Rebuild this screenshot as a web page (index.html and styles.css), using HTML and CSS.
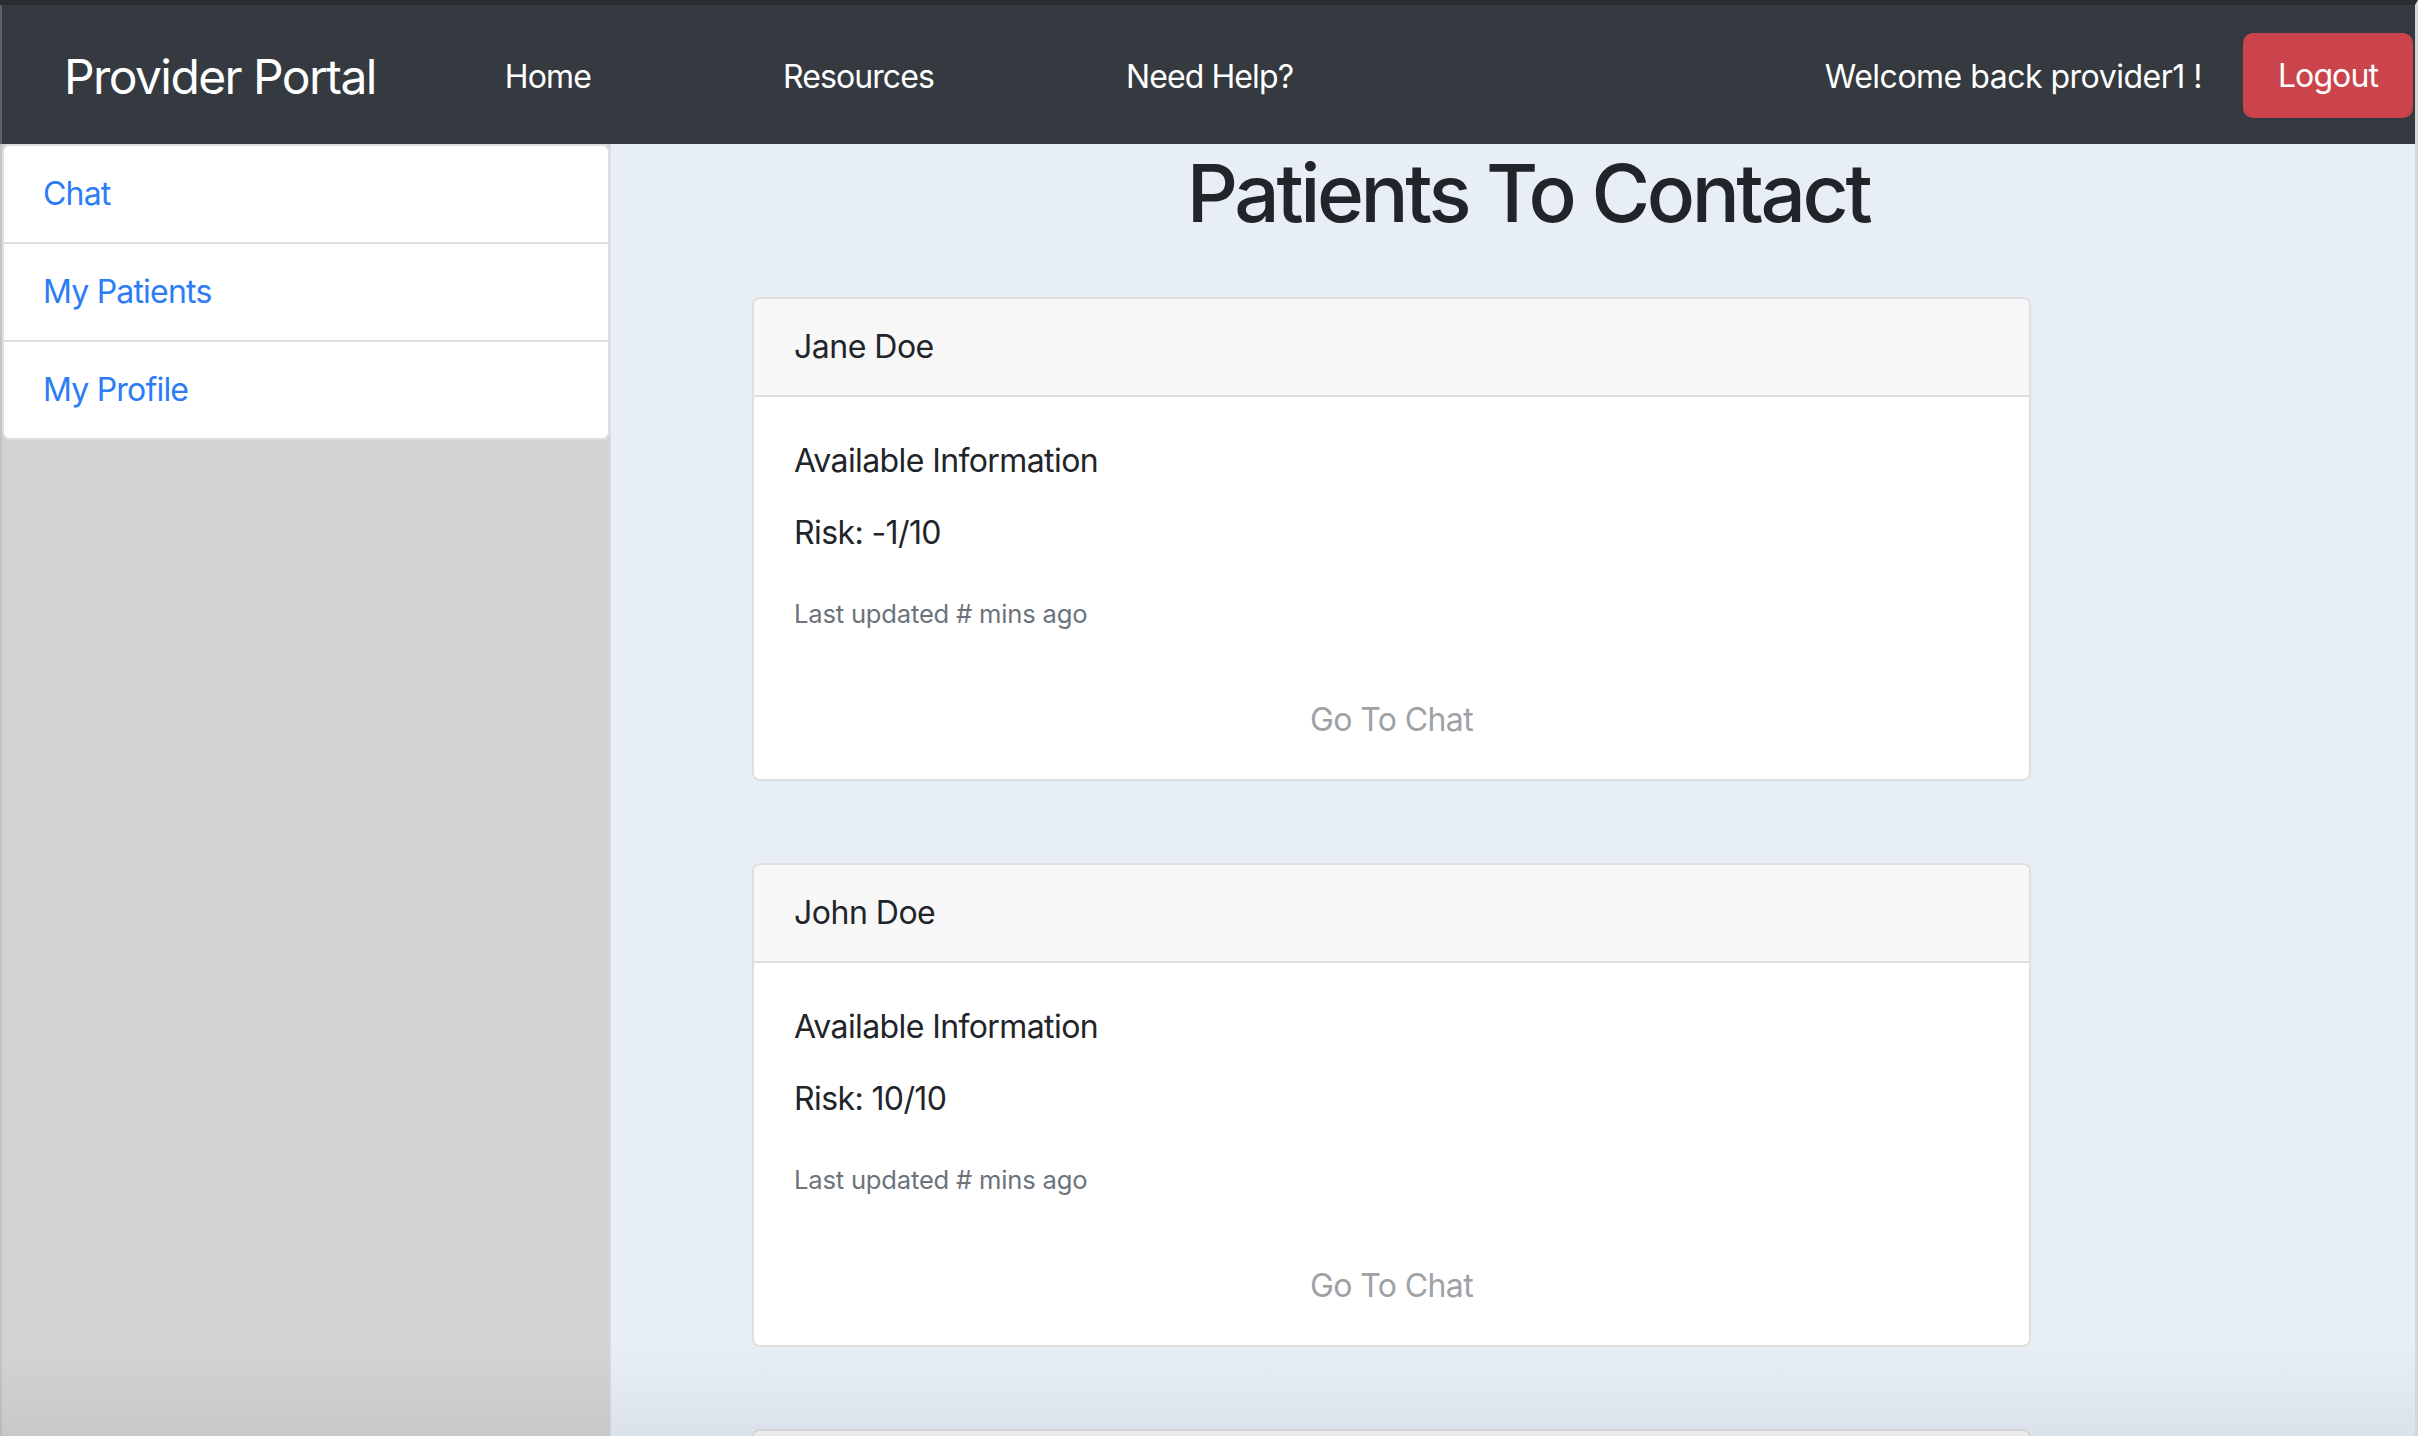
FILE: index.html
```html
<!DOCTYPE html>
<html lang="en">
<head>
<meta charset="utf-8">
<title>Provider Portal</title>
<link rel="stylesheet" href="styles.css">
</head>
<body>
<div class="window">
  <nav class="navbar">
    <a class="brand" href="#">Provider Portal</a>
    <ul class="nav">
      <li><a class="nav-link" href="#">Home</a></li>
      <li><a class="nav-link" href="#">Resources</a></li>
      <li><a class="nav-link" href="#">Need Help?</a></li>
    </ul>
    <div class="nav-right">
      <span class="welcome">Welcome back provider1 !</span>
      <button class="btn-logout" type="button">Logout</button>
    </div>
  </nav>
  <div class="layout">
    <aside class="sidebar">
      <div class="list-group">
        <a class="list-item" href="#">Chat</a>
        <a class="list-item" href="#">My Patients</a>
        <a class="list-item" href="#">My Profile</a>
      </div>
    </aside>
    <main class="main">
      <h1 class="page-title">Patients To Contact</h1>
      <div class="cards">
        <div class="card">
          <div class="card-header">Jane Doe</div>
          <div class="card-body">
            <div class="card-title">Available Information</div>
            <p class="risk">Risk: -1/10</p>
            <p class="updated"><small class="muted">Last updated # mins ago</small></p>
            <div class="chat-link">Go To Chat</div>
          </div>
        </div>
        <div class="card">
          <div class="card-header">John Doe</div>
          <div class="card-body">
            <div class="card-title">Available Information</div>
            <p class="risk">Risk: 10/10</p>
            <p class="updated"><small class="muted">Last updated # mins ago</small></p>
            <div class="chat-link">Go To Chat</div>
          </div>
        </div>
        <div class="card">
          <div class="card-header card-header-empty"></div>
        </div>
      </div>
    </main>
  </div>
  <div class="window-shade"></div>
</div>
</body>
</html>
```
FILE: styles.css
```css
html, body {
  margin: 0;
  padding: 0;
  height: 100%;
  overflow: hidden;
}

body {
  font-family: Inter, "Noto Sans", "Liberation Sans", sans-serif;
  font-size: 32px;
  line-height: 48px;
  color: #212529;
  background: #e8eef6;
}

.window {
  position: relative;
  box-sizing: border-box;
  width: 2418px;
  height: 1436px;
  border-top: 5px solid #2a2d31;
  border-right: 3px solid #d6d6d6;
  display: flex;
  flex-direction: column;
  overflow: hidden;
}

/* ---------- navbar ---------- */
.navbar {
  box-sizing: border-box;
  height: 139px;
  flex: none;
  background: #353a40;
  border-left: 2px solid #5d6165;
  padding-left: 62px;
  display: flex;
  align-items: flex-start;
}

.brand {
  margin-top: 48px;
  margin-right: 33px;
  font-size: 48px;
  line-height: 48px;
  letter-spacing: -1.6px;
  color: #fff;
  text-decoration: none;
  white-space: nowrap;
}

.nav {
  list-style: none;
  margin: 48px 0 0;
  padding: 0;
  display: flex;
}

.nav-link {
  display: block;
  padding: 0 96px;
  color: #fff;
  text-decoration: none;
  white-space: nowrap;
  letter-spacing: -0.9px;
}

.nav-right {
  margin-left: auto;
  display: flex;
  align-items: flex-start;
}

.welcome {
  margin-top: 48px;
  margin-right: 41px;
  color: #fff;
  white-space: nowrap;
  letter-spacing: -0.5px;
}

.btn-logout {
  margin-top: 28px;
  margin-right: 2px;
  box-sizing: border-box;
  height: 85px;
  padding: 17px 33px 16px;
  border: 2px solid #cc444b;
  border-radius: 10px;
  background: #cc444b;
  color: #fff;
  font-family: inherit;
  font-size: 32px;
  line-height: 48px;
  letter-spacing: -0.9px;
}

/* ---------- layout ---------- */
.layout {
  flex: 1;
  min-height: 0;
  display: flex;
}

.sidebar {
  box-sizing: border-box;
  width: 611px;
  flex: none;
  background: #d3d3d3;
  border-left: 2px solid #c4c4c4;
  border-right: 1px solid #dcdfe3;
}

.list-group {
  background: #fff;
  border: 2px solid #dfdfdf;
  border-radius: 8px;
  overflow: hidden;
}

.list-item {
  display: block;
  padding: 24px 39px;
  color: #2b7cf6;
  text-decoration: none;
  letter-spacing: -0.8px;
}

.list-item + .list-item {
  border-top: 2px solid #dfdfdf;
}

.main {
  flex: 1;
  min-width: 0;
  background: #e8eef6;
}

.page-title {
  margin: 1px 0 0;
  padding-left: 30px;
  text-align: center;
  font-size: 80px;
  line-height: 96px;
  font-weight: 500;
  letter-spacing: -3.4px;
  color: #212529;
}

.cards {
  margin: 56px 0 0 141px;
  width: 1279px;
}

.card {
  background: #fff;
  border: 2px solid #dfdfdf;
  border-radius: 8px;
  overflow: hidden;
  margin-bottom: 82px;
}

.card-header {
  background: #f7f7f7;
  padding: 24px 40px;
  border-bottom: 2px solid #dfdfdf;
  letter-spacing: -0.5px;
}

.card-header-empty {
  height: 48px;
}

.card-body {
  padding: 40px 40px 35px;
  letter-spacing: -0.6px;
}

.card-title {
  margin-bottom: 24px;
}

.risk {
  margin: 0 0 31px;
}

.updated {
  margin: 0 0 58px;
}

.muted {
  font-size: 25.6px;
  color: #6c737a;
  letter-spacing: -0.2px;
}

.chat-link {
  text-align: center;
  color: #9ea2a7;
}

/* bottom shading of the captured window */
.window-shade {
  position: absolute;
  left: 0;
  right: 0;
  bottom: 0;
  height: 90px;
  pointer-events: none;
  background: linear-gradient(to bottom, rgba(20, 30, 60, 0) 0%, rgba(20, 30, 60, 0.06) 100%);
}
```
